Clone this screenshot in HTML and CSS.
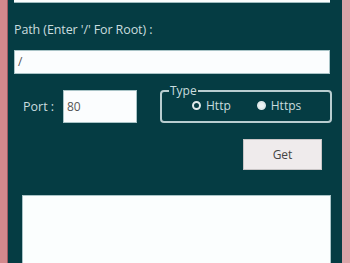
FILE: index.html
```html
<!DOCTYPE html>
<html>
<head>
<meta charset="utf-8">
<link rel="stylesheet" href="styles.css">
</head>
<body>
<div class="frame">
  <div class="panel">
    <div class="top-input"></div>
    <div class="label">Path (Enter '/' For Root) :</div>
    <div class="path-input">/</div>
    <div class="row">
      <div class="port">
        <span class="port-label">Port :</span>
        <div class="port-input">80</div>
      </div>
      <div class="type">
        <span class="legend">Type</span>
        <label class="radio first"><span class="dot"></span>Http</label>
        <label class="radio"><span class="dot filled"></span>Https</label>
      </div>
    </div>
    <div class="btn-row"><div class="btn">Get</div></div>
    <div class="output"></div>
  </div>
</div>
</body>
</html>
```
FILE: styles.css
```css
html, body {
  margin: 0;
  padding: 0;
  width: 350px;
  height: 263px;
  overflow: hidden;
  background: #053c43;
  font-family: "Open Sans", "DejaVu Sans", sans-serif;
}
.frame {
  display: flex;
  height: 263px;
  border-left: 7px solid #d4898d;
  border-right: 8px solid #dca4a9;
  box-shadow: inset 1px 0 0 #9c5a62;
}
.panel {
  flex: 1;
  display: flex;
  flex-direction: column;
  padding-left: 7px;
  padding-right: 12px;
}
.top-input {
  height: 2px;
  background: #fbfdfd;
  border-bottom: 1px solid #9fbcbf;
}
.label {
  margin-top: 20px;
  font-size: 12.5px;
  line-height: 14px;
  color: #c9dcdf;
  letter-spacing: -0.1px;
}
.path-input {
  margin-top: 13px;
  height: 22px;
  background: #fbfdfe;
  border: 1px solid #a9c4c7;
  font-size: 12px;
  line-height: 22px;
  color: #555;
  padding-left: 3px;
}
.row {
  margin-top: 16px;
  display: flex;
  align-items: flex-start;
}
.port {
  display: flex;
  align-items: center;
  width: 146px;
}
.port-label {
  font-size: 12.5px;
  color: #c9dcdf;
  margin-left: 9px;
  width: 40px;
}
.port-input {
  width: 69px;
  height: 31px;
  background: #fbfdfe;
  border: 1px solid #a9c4c7;
  font-size: 12px;
  line-height: 31px;
  padding-left: 3px;
  color: #555;
}
.type {
  position: relative;
  flex: 1;
  margin-right: -2px;
  padding: 0 0 3px 30px;
  border: 2px solid #b9cdd0;
  border-radius: 4px;
  display: flex;
  align-items: center;
  height: 26px;
}
.legend {
  position: absolute;
  top: -8px;
  left: 7px;
  font-size: 12px;
  line-height: 13px;
  color: #c9dcdf;
  padding: 0 1px;
  background: #053c43;
}
.radio {
  display: flex;
  align-items: center;
  gap: 5px;
  font-size: 12px;
  color: #c9dcdf;
}
.radio.first {
  margin-right: 26px;
}
.dot {
  width: 5px;
  height: 5px;
  border-radius: 50%;
  border: 2px solid #dfe9ea;
  background: #053c43;
}
.dot.filled {
  background: #eef4f4;
}
.btn-row {
  display: flex;
  justify-content: flex-end;
  margin-top: 16px;
  padding-right: 8px;
}
.btn {
  width: 77px;
  height: 29px;
  background: #efebec;
  border: 1px solid #c9c5c6;
  font-size: 12px;
  line-height: 29px;
  text-align: center;
  color: #444;
}
.output {
  margin-top: 25px;
  margin-left: 8px;
  margin-right: -1px;
  flex: 1;
  background: #fbfefe;
  border: 1px solid #a9c4c7;
  border-bottom: none;
}
```
